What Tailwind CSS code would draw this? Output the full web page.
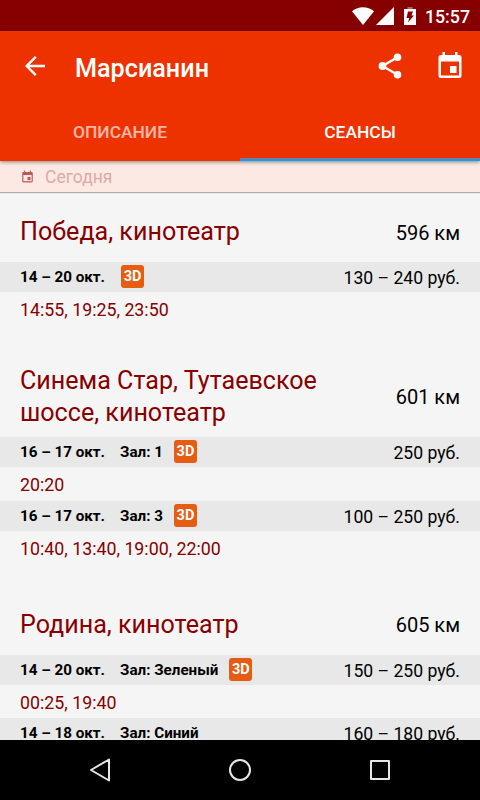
<!DOCTYPE html>
<html lang="ru">
<head>
    <meta charset="UTF-8">
    <meta name="viewport" content="width=device-width, initial-scale=1.0">
    <title>Марсианин</title>
    <script src="https://cdn.jsdelivr.net/npm/@tailwindcss/browser@4"></script>
</head>
<body class="bg-black font-['Roboto',sans-serif]">
<div class="w-[480px] h-[800px] flex flex-col overflow-hidden bg-[#f5f5f5]">
    <div class="h-[31px] shrink-0 bg-[#870000] flex items-center justify-end pr-[10px] text-white">
        <svg class="w-[22px] h-[18px]" viewBox="0 0 22 18" fill="currentColor"><path d="M0 4.200C6.500-1 15.500-1 22 4.200L11 18z"/></svg>
        <svg class="w-[18px] h-[18px] ml-[2px]" viewBox="0 0 18 18" fill="currentColor"><path d="M18 0v18H0z"/></svg>
        <svg class="w-3 h-[18px] ml-[10px]" viewBox="0 0 12 18"><path fill="#fff" fill-opacity=".4" d="M3.500 0h5v2h-5z"/><path fill="currentColor" d="M0 2h12v16H0z"/><path fill="#870000" d="M4 4.500h5L7.500 8.500h2.500L4 15.500 5.300 11H2.500z"/></svg>
        <span class="ml-[9px] text-[17.8px] leading-[31px] pt-[2px] font-medium">15:57</span>
    </div>

    <header class="relative z-10 h-[130px] shrink-0 bg-[#ed3200] text-white shadow-[0_1px_4px_rgba(0,0,0,0.45)] flex flex-col">
        <div class="h-[72px] flex items-center pl-[25px] pr-[18px]">
            <svg class="w-5 h-5 mb-px" viewBox="0 0 20 20" fill="none" stroke="currentColor" stroke-width="2.400"><path d="M20 10H2M10.800.9L1.700 10l9.100 9.100"/></svg>
            <h1 class="ml-[30px] mt-1 text-[25.2px] leading-8 font-medium">Марсианин</h1>
            <svg class="ml-auto mb-[2px] w-[24px] h-[26px]" viewBox="0 0 24 26" fill="currentColor"><path d="M19.500 4.200L4.500 13l15 8.800" fill="none" stroke="currentColor" stroke-width="2.400"/><circle cx="19.500" cy="4.200" r="3.800"/><circle cx="4.500" cy="13" r="3.900"/><circle cx="19.500" cy="21.800" r="3.800"/></svg>
            <svg class="ml-[36px] mb-[3px] w-[24px] h-[26px]" viewBox="0 0 24 26" fill="currentColor"><path fill-rule="evenodd" d="M4.500 0H7v3h10V0h2.500v3h1.500q2.500 0 2.500 2.500v18q0 2.500-2.500 2.500H3Q.5 26 .5 23.500v-18Q.5 3 3 3h1.500zM3 9.500v14h18v-14z"/><path d="M12 14h6.500v7H12z"/></svg>
        </div>
        <nav class="flex flex-1 text-[17.4px] font-medium text-center">
            <a class="w-1/2 pt-[2px] leading-[57px] text-white/65">ОПИСАНИЕ</a>
            <a class="w-1/2 pt-[2px] leading-[57px] shadow-[inset_0_-2px_#03a2fc,inset_0_-3px_#a86a80]">СЕАНСЫ</a>
        </nav>
    </header>

    <div class="h-[31px] shrink-0 bg-[#fde9e3] flex items-center pl-[22px] shadow-[0_1px_1px_rgba(0,0,0,0.3)]">
        <svg class="w-[11px] h-[13px] mb-px text-[#b95a5a]" viewBox="0 0 24 26" fill="currentColor"><path fill-rule="evenodd" d="M4.500 0H7v3h10V0h2.500v3h1.500q2.500 0 2.500 2.500v18q0 2.500-2.500 2.500H3Q.5 26 .5 23.500v-18Q.5 3 3 3h1.500zM3 9.500v14h18v-14z"/><path d="M12 14h6.500v7H12z"/></svg>
        <span class="ml-3 pt-px text-[17.5px] text-[#dcaaa8]">Сегодня</span>
    </div>

    <main class="flex-1 min-h-0 overflow-hidden pt-[10px] text-[#870000] text-[17.6px]">
        <section class="mb-[31px]">
            <div class="h-[60px] px-5 flex items-center justify-between">
                <h2 class="text-[25.1px] leading-8">Победа, кинотеатр</h2>
                <span class="pt-px text-[20px] text-black">596 км</span>
            </div>
            <div class="h-[30px] px-5 bg-[#e8e8e8] text-black flex items-center">
                <b class="text-[15.2px]">14 – 20 окт.</b>
                <span class="ml-4 mb-[2px] w-[23px] h-[23px] rounded-[3px] bg-[#e65c12] text-white text-[14.5px] leading-[24px] font-bold text-center">3D</span>
                <span class="ml-auto pt-[2px]">130 – 240 руб.</span>
            </div>
            <p class="h-[34px] px-5 leading-[35px] text-[17.8px]">14:55, 19:25, 23:50</p>
        </section>

        <section class="mb-[30px]">
            <div class="h-20 px-5 flex items-center justify-between">
                <h2 class="text-[25.1px] leading-8">Синема Стар, Тутаевское<br>шоссе, кинотеатр</h2>
                <span class="text-[20px] text-black">601 км</span>
            </div>
            <div class="h-[30px] px-5 bg-[#e8e8e8] text-black flex items-center">
                <b class="text-[15.2px]">16 – 17 окт.</b>
                <b class="ml-[15px] text-[15.2px]">Зал: 1</b>
                <span class="ml-[11px] mb-[2px] w-[23px] h-[23px] rounded-[3px] bg-[#e65c12] text-white text-[14.5px] leading-[24px] font-bold text-center">3D</span>
                <span class="ml-auto pt-[2px]">250 руб.</span>
            </div>
            <p class="h-[34px] px-5 leading-[35px] text-[17.8px]">20:20</p>
            <div class="h-[30px] px-5 bg-[#e8e8e8] text-black flex items-center">
                <b class="text-[15.2px]">16 – 17 окт.</b>
                <b class="ml-[15px] text-[15.2px]">Зал: 3</b>
                <span class="ml-[11px] mb-[2px] w-[23px] h-[23px] rounded-[3px] bg-[#e65c12] text-white text-[14.5px] leading-[24px] font-bold text-center">3D</span>
                <span class="ml-auto pt-[2px]">100 – 250 руб.</span>
            </div>
            <p class="h-[34px] px-5 leading-[35px] text-[17.8px]">10:40, 13:40, 19:00, 22:00</p>
        </section>

        <section>
            <div class="h-[60px] px-5 flex items-center justify-between">
                <h2 class="text-[25.1px] leading-8">Родина, кинотеатр</h2>
                <span class="text-[20px] text-black">605 км</span>
            </div>
            <div class="h-[30px] px-5 bg-[#e8e8e8] text-black flex items-center">
                <b class="text-[15.2px]">14 – 20 окт.</b>
                <b class="ml-[15px] text-[15.2px]">Зал: Зеленый</b>
                <span class="ml-[11px] mb-[2px] w-[23px] h-[23px] rounded-[3px] bg-[#e65c12] text-white text-[14.5px] leading-[24px] font-bold text-center">3D</span>
                <span class="ml-auto pt-[2px]">150 – 250 руб.</span>
            </div>
            <p class="h-[33px] px-5 leading-[35px] text-[17.8px]">00:25, 19:40</p>
            <div class="h-[30px] px-5 bg-[#e8e8e8] text-black flex items-center">
                <b class="text-[15.2px]">14 – 18 окт.</b>
                <b class="ml-[15px] text-[15.2px]">Зал: Синий</b>
                <span class="ml-auto pt-[2px]">160 – 180 руб.</span>
            </div>
        </section>
    </main>

    <footer class="h-[60px] shrink-0 bg-black flex items-center justify-around px-[30px] text-[#e6e6e6]">
        <svg class="w-6 h-6" viewBox="0 0 24 24" fill="none" stroke="currentColor" stroke-width="2" stroke-linejoin="round"><path d="M21 1.500v21L3 12z"/></svg>
        <svg class="w-6 h-6" viewBox="0 0 24 24" fill="none" stroke="currentColor" stroke-width="2"><circle cx="12" cy="12" r="10"/></svg>
        <svg class="w-6 h-6" viewBox="0 0 24 24" fill="none" stroke="currentColor" stroke-width="2" stroke-linejoin="round"><path d="M3 3h18v18H3z"/></svg>
    </footer>
</div>
</body>
</html>
